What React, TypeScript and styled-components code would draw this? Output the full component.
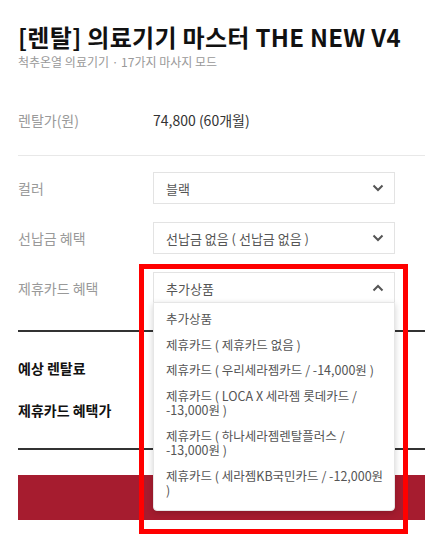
import React, { useState } from 'react';
import styled, { createGlobalStyle } from 'styled-components';

const GlobalStyle = createGlobalStyle`
    html, body {
        margin: 0;
        padding: 0;
        background: #fff;
        overflow: hidden;
    }
    body {
        font-family: "Noto Sans CJK KR", "Noto Sans", sans-serif;
        color: #222;
    }
`;

const Page = styled.div`
    width: 425px;
    height: 544px;
    padding-left: 18px;
    box-sizing: border-box;
    overflow: hidden;
`;

const Title = styled.h1`
    margin: 22px 0 0;
    font-size: 24px;
    line-height: 30px;
    font-weight: 700;
    color: #111;
    white-space: nowrap;
    letter-spacing: 0.3px;
`;

const Subtitle = styled.p`
    margin: 1px 0 0;
    font-size: 12px;
    line-height: 18px;
    color: #999;
`;

const Divider = styled.div<{ $dark?: boolean }>`
    height: ${(p) => (p.$dark ? '2px' : '1px')};
    background: ${(p) => (p.$dark ? '#333' : '#e8e8e8')};
`;

const PriceRow = styled.div`
    display: flex;
    align-items: center;
    margin-top: 20px;
    padding: 19px 0 25px;
    font-size: 14px;
    line-height: 20px;
`;

const Label = styled.div`
    width: 135px;
    flex-shrink: 0;
    font-size: 14px;
    color: #999;
`;

const Value = styled.div`
    color: #333;
    font-size: 14px;
`;

const Options = styled.div`
    display: flex;
    flex-direction: column;
    gap: 18px;
    padding: 16px 0 26px;
`;

const OptionRow = styled.div`
    display: flex;
    align-items: center;
`;

const SelectWrap = styled.div`
    position: relative;
    width: 242px;
`;

const SelectBox = styled.div`
    display: flex;
    align-items: center;
    justify-content: space-between;
    height: 32px;
    padding: 0 10px 0 12px;
    box-sizing: border-box;
    border: 1px solid #e3e3e3;
    background: #fff;
    font-size: 13px;
    color: #555;
    cursor: pointer;
`;

const Menu = styled.ul`
    position: absolute;
    left: 0;
    right: 0;
    top: 30px;
    margin: 0;
    padding: 4px 0 6px;
    list-style: none;
    background: #fff;
    border: 1px solid #e6e6e6;
    border-radius: 0 0 4px 4px;
    box-shadow: 0 2px 6px rgba(0, 0, 0, 0.18);
    z-index: 5;
`;

const MenuItem = styled.li`
    padding: 5px 8px 6px 12px;
    font-size: 12.5px;
    line-height: 14.5px;
    color: #555;
`;

const Highlight = styled.div`
    position: absolute;
    left: -14px;
    top: -8px;
    width: 269px;
    height: 270px;
    box-sizing: border-box;
    border: 5px solid #f00;
    z-index: 10;
    pointer-events: none;
`;

const Summary = styled.div`
    display: flex;
    flex-direction: column;
    gap: 22px;
    padding: 26px 0 28px;
`;

const SummaryLabel = styled.div`
    font-size: 14px;
    line-height: 20px;
    font-weight: 700;
    color: #111;
`;

const OrderButton = styled.button`
    display: block;
    width: 100%;
    height: 45px;
    margin-top: 25px;
    border: none;
    background: #a61c2f;
    cursor: pointer;
`;

const Chevron = ({ up }: { up?: boolean }) => (
    <svg width="12" height="8" viewBox="0 0 12 8">
        <path
            d={up ? 'M1.5 6.5 L6 2 L10.5 6.5' : 'M1.5 1.5 L6 6 L10.5 1.5'}
            fill="none"
            stroke="#555"
            strokeWidth="2"
        />
    </svg>
);

const cardOptions = [
    '추가상품',
    '제휴카드 ( 제휴카드 없음 )',
    '제휴카드 ( 우리세라젬카드 / -14,000원 )',
    '제휴카드 ( LOCA X 세라젬 롯데카드 / -13,000원 )',
    '제휴카드 ( 하나세라젬렌탈플러스 / -13,000원 )',
    '제휴카드 ( 세라젬KB국민카드 / -12,000원 )',
];

const App: React.FC = () => {
    const [open, setOpen] = useState(true);
    const [card, setCard] = useState('추가상품');

    return (
        <Page>
            <GlobalStyle />
            <Title>[렌탈] 의료기기 마스터 THE NEW V4</Title>
            <Subtitle>척추온열 의료기기 · 17가지 마사지 모드</Subtitle>
            <PriceRow>
                <Label>렌탈가(원)</Label>
                <Value>74,800 (60개월)</Value>
            </PriceRow>
            <Divider />
            <Options>
                <OptionRow>
                    <Label>컬러</Label>
                    <SelectWrap>
                        <SelectBox>
                            <span>블랙</span>
                            <Chevron />
                        </SelectBox>
                    </SelectWrap>
                </OptionRow>
                <OptionRow>
                    <Label>선납금 혜택</Label>
                    <SelectWrap>
                        <SelectBox>
                            <span>선납금 없음 ( 선납금 없음 )</span>
                            <Chevron />
                        </SelectBox>
                    </SelectWrap>
                </OptionRow>
                <OptionRow>
                    <Label>제휴카드 혜택</Label>
                    <SelectWrap>
                        <SelectBox onClick={() => setOpen(!open)}>
                            <span>{card}</span>
                            <Chevron up={open} />
                        </SelectBox>
                        {open && (
                            <Menu>
                                {cardOptions.map((opt) => (
                                    <MenuItem key={opt} onClick={() => { setCard(opt); setOpen(false); }}>
                                        {opt}
                                    </MenuItem>
                                ))}
                            </Menu>
                        )}
                        <Highlight />
                    </SelectWrap>
                </OptionRow>
            </Options>
            <Divider $dark />
            <Summary>
                <SummaryLabel>예상 렌탈료</SummaryLabel>
                <SummaryLabel>제휴카드 혜택가</SummaryLabel>
            </Summary>
            <Divider $dark />
            <OrderButton />
        </Page>
    );
};

export default App;
